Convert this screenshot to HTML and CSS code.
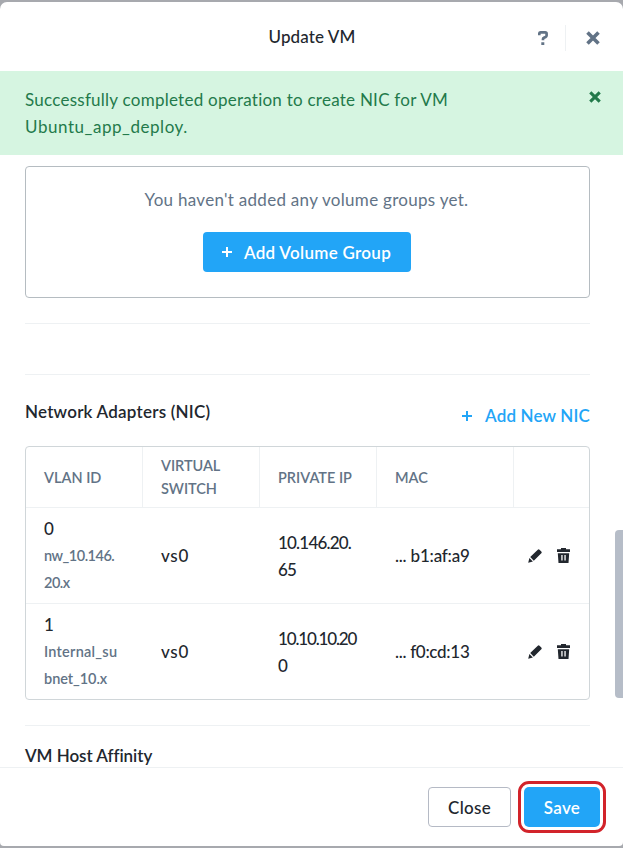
FILE: index.html
```html
<!DOCTYPE html>
<html lang="en">
<head>
<meta charset="utf-8">
<title>Update VM</title>
<link rel="stylesheet" href="styles.css">
</head>
<body>
<svg class="sprite" aria-hidden="true">
  <symbol id="plus" viewBox="0 0 10 10"><path d="M5 0v10M0 5h10" fill="none" stroke="currentColor" stroke-width="2"/></symbol>
  <symbol id="cross" viewBox="0 0 14 14"><path d="M1.500 1.500l11 11M12.500 1.500l-11 11" fill="none" stroke="currentColor" stroke-width="3.600"/></symbol>
  <symbol id="help" viewBox="0 0 10 14"><path d="M1.300 4.200V2.700q0-1.300 1.300-1.300h4.600q1.400 0 1.400 1.400v1.700q0 1-.9 1.400L5.900 6.700q-.9.400-.9 1.300v1.300" fill="none" stroke="currentColor" stroke-width="2.700"/><path d="M3.300 11.200h3V14h-3z" fill="currentColor"/></symbol>
  <symbol id="pencil" viewBox="0 0 14 14"><path d="M9.800.7q.9-.8 1.700 0l1.800 1.800q.8.900 0 1.700L5.800 11.700 2.200 8z M1.400 9l3.500 3.500L.2 13.800z" fill="currentColor"/></symbol>
  <symbol id="trash" viewBox="0 0 13 15"><path d="M4 0h5v1.300h4V4H0V1.300h4z" fill="currentColor"/><path d="M.8 5.200h11.400L11.500 15h-10z M4.300 7v5.500h1.300V7z M7.400 7v5.500h1.300V7z" fill="currentColor" fill-rule="evenodd"/></symbol>
</svg>
<div class="modal">
  <header class="header">
    <h1 class="title">Update VM</h1>
    <div class="header-actions">
      <button class="icon-button help" aria-label="Help"><svg width="10" height="14"><use href="#help"/></svg></button>
      <button class="icon-button dismiss" aria-label="Close dialog"><svg width="14" height="14"><use href="#cross"/></svg></button>
    </div>
  </header>
  <div class="alert">
    <p>Successfully completed operation to create NIC for VM<br><span class="vm-name">Ubuntu_app_deploy.</span></p>
    <button class="icon-button" aria-label="Dismiss message"><svg width="12" height="12"><use href="#cross"/></svg></button>
  </div>
  <main class="body">
    <section class="volume-groups">
      <p>You haven't added any volume groups yet.</p>
      <button class="button primary add-volume"><svg width="10" height="10"><use href="#plus"/></svg><span>Add Volume Group</span></button>
    </section>
    <hr class="rule">
    <section class="nics">
      <div class="section-head">
        <h2 class="heading">Network Adapters (NIC)</h2>
        <button class="add-nic"><svg width="10" height="10"><use href="#plus"/></svg><span>Add New NIC</span></button>
      </div>
      <div class="table-frame">
        <table>
          <colgroup><col class="c-vlan"><col class="c-switch"><col class="c-ip"><col class="c-mac"><col></colgroup>
          <thead>
            <tr><th>VLAN ID</th><th class="tight">VIRTUAL<br>SWITCH</th><th>PRIVATE IP</th><th>MAC</th><th></th></tr>
          </thead>
          <tbody>
            <tr>
              <td><div>0</div><div class="network numeric">nw_10.146.<br>20.x</div></td>
              <td class="wide">vs0</td>
              <td class="ip">10.146.20.<br>65</td>
              <td class="mac">... b1:af:a9</td>
              <td><div class="row-actions"><svg width="14" height="14"><use href="#pencil"/></svg><svg width="13" height="15"><use href="#trash"/></svg></div></td>
            </tr>
            <tr>
              <td><div>1</div><div class="network"><span class="subnet">Internal_su</span><br>bnet_10.x</div></td>
              <td class="wide">vs0</td>
              <td class="ip ip-long">10.10.10.20<br>0</td>
              <td class="mac mac-long">... f0:cd:13</td>
              <td><div class="row-actions"><svg width="14" height="14"><use href="#pencil"/></svg><svg width="13" height="15"><use href="#trash"/></svg></div></td>
            </tr>
          </tbody>
        </table>
      </div>
    </section>
    <section class="affinity">
      <h2 class="heading">VM Host Affinity</h2>
    </section>
    <div class="scroll-thumb"></div>
  </main>
  <footer class="footer">
    <button class="button secondary">Close</button>
    <button class="button primary save">Save</button>
  </footer>
</div>
</body>
</html>
```
FILE: styles.css
```css
* { box-sizing: border-box; }

body {
  margin: 0;
  height: 848px;
  padding: 2px 0;
  overflow: hidden;
  background: #a7a9ae;
  color: #22272e;
  font: 500 17px/27px Lato, "Open Sans", sans-serif;
}

h1, h2, p { margin: 0; font-size: inherit; }

button {
  padding: 0;
  border: 0;
  background: none;
  color: inherit;
  font: inherit;
}

svg { display: block; flex: none; }

.sprite { display: none; }

.modal {
  display: flex;
  flex-direction: column;
  height: 844px;
  border-radius: 7px 7px 4px 4px;
  background: #fff;
  overflow: hidden;
}

.header {
  display: grid;
  grid-template-columns: 1fr auto 1fr;
  flex: none;
  height: 69px;
  padding: 0 17px 0 18px;
  align-items: center;
}

.title {
  grid-column: 2;
  font-weight: 500;
  letter-spacing: 0.1px;
}

.header-actions {
  display: flex;
  justify-self: end;
  align-items: center;
  padding-top: 3px;
  color: #627386;
}

.icon-button {
  display: flex;
  align-items: center;
  justify-content: center;
}

.help { padding-right: 17px; height: 26px; border-right: 1px solid #eef1f3; }
.dismiss { padding: 0 6px 0 20px; }

.alert {
  display: flex;
  flex: none;
  justify-content: space-between;
  align-items: flex-start;
  height: 84px;
  padding: 15px 22px 0 25px;
  background: #d6f5e1;
  color: #237a4b;
  font-weight: 400;
  letter-spacing: 0.25px;
}

.alert .icon-button { padding-top: 5px; }
.vm-name { letter-spacing: 0.55px; }

.body {
  position: relative;
  flex: 1;
  min-height: 0;
  padding: 11px 33px 0 25px;
  overflow: hidden;
}

.volume-groups {
  display: flex;
  flex-direction: column;
  align-items: center;
  gap: 19px;
  height: 132px;
  padding: 19px 2px 0 0;
  border: 1px solid #b5bcc1;
  border-radius: 4px;
  color: #627386;
  font-weight: 400;
  letter-spacing: 0.29px;
}

.button {
  display: flex;
  align-items: center;
  justify-content: center;
  height: 40px;
  border-radius: 4px;
  letter-spacing: 0.3px;
}

.primary {
  background: #22a5f7;
  color: #fff;
  font-weight: 600;
}

.add-volume { width: 208px; gap: 12px; }

.rule {
  height: 1px;
  margin: 25px 0 0;
  border: 0;
  background: #eef1f3;
}

.nics {
  margin-top: 50px;
  border-top: 1px solid #eef1f3;
}

.section-head {
  display: flex;
  justify-content: space-between;
  align-items: flex-start;
  height: 71px;
  padding-top: 23px;
}

.heading {
  font-weight: 600;
  letter-spacing: 0.22px;
}

.add-nic {
  display: flex;
  align-items: center;
  gap: 13px;
  padding-top: 4px;
  color: #22a5f7;
  font-weight: 600;
  letter-spacing: 0.15px;
}

.table-frame {
  border: 1px solid #d0d6d9;
  border-radius: 4px;
}

table {
  width: 100%;
  table-layout: fixed;
  border-collapse: separate;
  border-spacing: 0;
}

.c-vlan, .c-switch, .c-ip { width: 117px; }
.c-mac { width: 137px; }

th, td {
  padding: 0 0 0 18px;
  text-align: left;
  vertical-align: middle;
}

th {
  height: 61px;
  border-right: 1px solid #eef1f3;
  border-bottom: 1px solid #eef1f3;
  color: #627386;
  font-size: 14.5px;
  font-weight: 600;
  line-height: 23px;
}

th:last-child { border-right: 0; }
.tight { letter-spacing: -0.05px; }

td { height: 95px; }
tbody tr:first-child td { height: 96px; border-bottom: 1px solid #eef1f3; }

.network {
  color: #627386;
  font-size: 14.5px;
  font-weight: 600;
  letter-spacing: -0.05px;
}

.numeric { letter-spacing: -0.5px; }
.subnet { letter-spacing: 0.25px; }
.wide { letter-spacing: 0.7px; }
.ip { letter-spacing: -0.8px; }
.ip-long { letter-spacing: -1.15px; }
.mac { letter-spacing: -0.2px; }
.mac-long { letter-spacing: -0.3px; }

.row-actions {
  display: flex;
  align-items: center;
  gap: 15px;
  margin-left: -4px;
}

.affinity {
  margin-top: 25px;
  padding-top: 17px;
  border-top: 1px solid #eef1f3;
}

.affinity .heading {
  line-height: 26px;
  letter-spacing: -0.05px;
}

.scroll-thumb {
  position: absolute;
  top: 375px;
  right: 0;
  width: 8px;
  height: 168px;
  border-radius: 4px 0 0 4px;
  background: #b6bdc8;
}

.footer {
  display: flex;
  flex: none;
  justify-content: flex-end;
  gap: 13px;
  height: 79px;
  padding: 19px 23px 0 0;
  border-top: 1px solid #eef1f3;
}

.secondary {
  width: 83px;
  border: 1px solid #b5bac5;
}

.save {
  width: 76px;
  border-radius: 5px;
  outline: 3px solid #d2232a;
  outline-offset: 3px;
}
```
